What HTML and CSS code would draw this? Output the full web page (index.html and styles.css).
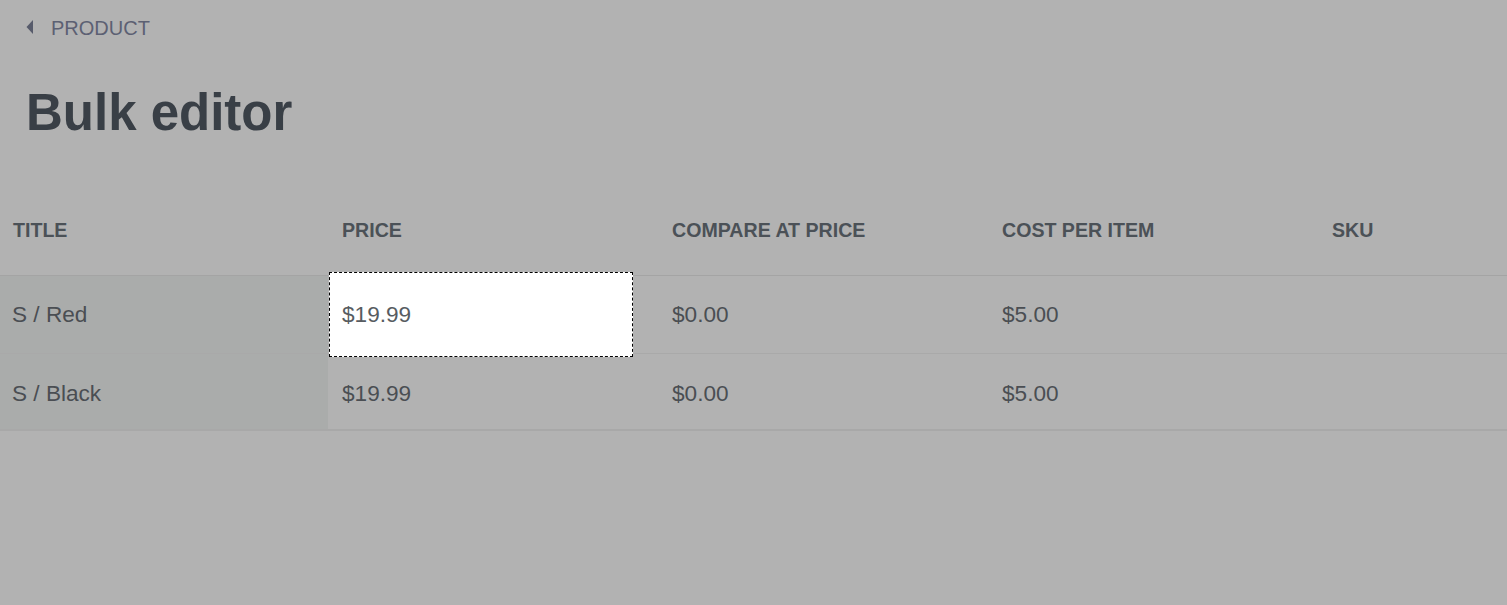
FILE: index.html
```html
<!DOCTYPE html>
<html lang="en">
<head>
<meta charset="utf-8">
<title>Bulk editor</title>
<link rel="stylesheet" href="styles.css">
</head>
<body>
<div class="page">
  <div class="top">
    <a class="back" href="#">
      <svg class="back-icon" width="8" height="16" viewBox="0 0 8 16"><path d="M7 1 L0.5 8 L7 15 Z" fill="#575b6b"/></svg>
      <span>PRODUCT</span>
    </a>
    <h1 class="title">Bulk editor</h1>
  </div>
  <div class="grid">
    <div class="row head">
      <div class="cell c1">TITLE</div>
      <div class="cell">PRICE</div>
      <div class="cell">COMPARE AT PRICE</div>
      <div class="cell">COST PER ITEM</div>
      <div class="cell last">SKU</div>
    </div>
    <div class="row body">
      <div class="cell c1 name">S / Red</div>
      <div class="cell focus-cell">
        <div class="editor">$19.99</div>
      </div>
      <div class="cell">$0.00</div>
      <div class="cell">$5.00</div>
      <div class="cell last"></div>
    </div>
    <div class="row body end">
      <div class="cell c1 name">S / Black</div>
      <div class="cell">$19.99</div>
      <div class="cell">$0.00</div>
      <div class="cell">$5.00</div>
      <div class="cell last"></div>
    </div>
  </div>
</div>
</body>
</html>
```

FILE: styles.css
```css
html, body {
  margin: 0;
  padding: 0;
  background: #b2b2b2;
  height: 100%;
}
body {
  font-family: "Liberation Sans", Arial, sans-serif;
  color: #4a4e53;
}
.page {
  min-height: 605px;
  background: #b2b2b2;
}
.top {
  padding: 16px 0 0 26px;
}
.back {
  display: flex;
  align-items: center;
  gap: 17px;
  height: 24px;
  text-decoration: none;
  color: #5c6073;
  font-size: 20px;
  line-height: 24px;
}
.back-icon {
  display: block;
  margin-top: -2px;
}
.title {
  margin: 43px 0 0 0;
  font-size: 51px;
  line-height: 60px;
  font-weight: 700;
  color: #393f46;
}
.grid {
  margin-top: 43px;
}
.row {
  display: grid;
  grid-template-columns: 328px 330px 330px 330px 1fr;
}
.row.head {
  height: 89px;
  border-bottom: 1px solid #a4a4a4;
  font-weight: 700;
  font-size: 19.6px;
  color: #4b5157;
}
.row.head .cell {
  padding-left: 14px;
  padding-bottom: 1px;
}
.row.head .c1 {
  padding-left: 13px;
}
.cell {
  display: flex;
  align-items: center;
  padding-left: 14px;
}
.row.body {
  height: 77px;
  border-bottom: 1px solid #a9a9a9;
  font-size: 22.6px;
}
.row.body.end {
  height: 75px;
  border-bottom: 2px solid #a8a8a8;
}
.row.body.end .cell {
  padding-top: 5px;
}
.row.body .c1 {
  background: #aaacab;
  padding-left: 12px;
}
.focus-cell {
  position: relative;
}
.editor {
  position: absolute;
  top: -4px;
  left: 1px;
  box-sizing: border-box;
  width: 304px;
  height: 85px;
  background: #ffffff;
  border: 1px dashed #000000;
  display: flex;
  align-items: center;
  padding-left: 12px;
  color: #575c61;
}
```
